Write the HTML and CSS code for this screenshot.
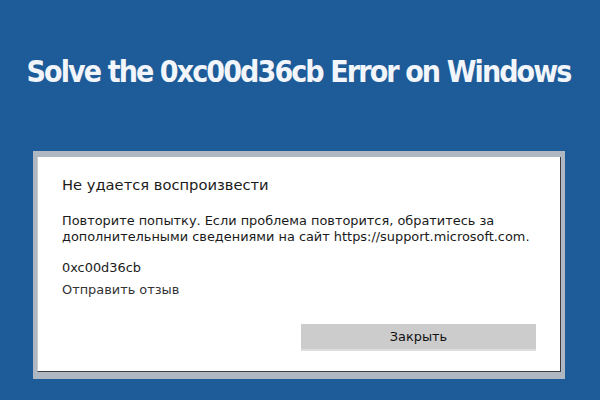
FILE: index.html
```html
<!DOCTYPE html>
<html lang="ru">
<head>
<meta charset="utf-8">
<link rel="stylesheet" href="styles.css">
</head>
<body>
<div class="page">
  <header class="banner">
    <h1 class="headline">Solve the 0xc00d36cb Error on Windows</h1>
  </header>
  <div class="frame">
    <div class="dialog">
      <div class="dialog-title">Не удается воспроизвести</div>
      <p class="dialog-msg">Повторите попытку. Если проблема повторится, обратитесь за<br>дополнительными сведениями на сайт https://support.microsoft.com.</p>
      <div class="dialog-code">0xc00d36cb</div>
      <div class="dialog-link">Отправить отзыв</div>
      <div class="dialog-actions">
        <button class="btn">Закрыть</button>
      </div>
    </div>
  </div>
</div>
</body>
</html>
```

FILE: styles.css
```css
html, body {
  margin: 0;
  padding: 0;
}
body {
  background: #1e5c99;
  width: 600px;
  height: 400px;
  overflow: hidden;
}
.page {
  display: flex;
  flex-direction: column;
}
.banner {
  height: 151px;
  display: flex;
  justify-content: center;
  box-sizing: border-box;
  padding-top: 52px;
  padding-right: 3px;
}
.headline {
  margin: 0;
  font-family: "Liberation Sans Narrow", "DejaVu Sans Condensed", sans-serif;
  font-weight: bold;
  font-size: 30px;
  line-height: 40px;
  color: #f2f5f9;
  letter-spacing: -1.9px;
  white-space: nowrap;
}
.frame {
  margin-left: 33px;
  width: 532px;
  height: 228px;
  box-sizing: border-box;
  background: #aeb7c2;
  padding: 6px 4px 7px 4px;
}
.dialog {
  height: 100%;
  box-sizing: border-box;
  background: #ffffff;
  border-left: 1px solid #c8cdd3;
  border-right: 1px solid #3c3c3c;
  border-bottom: 1px solid #3c3c3c;
  padding: 18px 0 0 24px;
  font-family: "DejaVu Sans", sans-serif;
  color: #1a1a1a;
  display: flex;
  flex-direction: column;
}
.dialog-title {
  font-size: 14.7px;
  line-height: 20px;
}
.dialog-msg {
  margin: 18px 0 0 0;
  font-size: 12.9px;
  line-height: 16px;
}
.dialog-code {
  margin-top: 15px;
  font-size: 12.9px;
  line-height: 16px;
}
.dialog-link {
  margin-top: 6px;
  font-size: 12.9px;
  line-height: 16px;
  color: #333;
}
.dialog-actions {
  display: flex;
  justify-content: flex-end;
  padding-right: 24px;
  margin-top: 26px;
}
.btn {
  width: 235px;
  height: 27px;
  border: 0;
  border-bottom: 2px solid #dedede;
  background: #cccccc;
  font-family: "DejaVu Sans", sans-serif;
  font-size: 12.9px;
  color: #111;
  padding: 0;
}
```
